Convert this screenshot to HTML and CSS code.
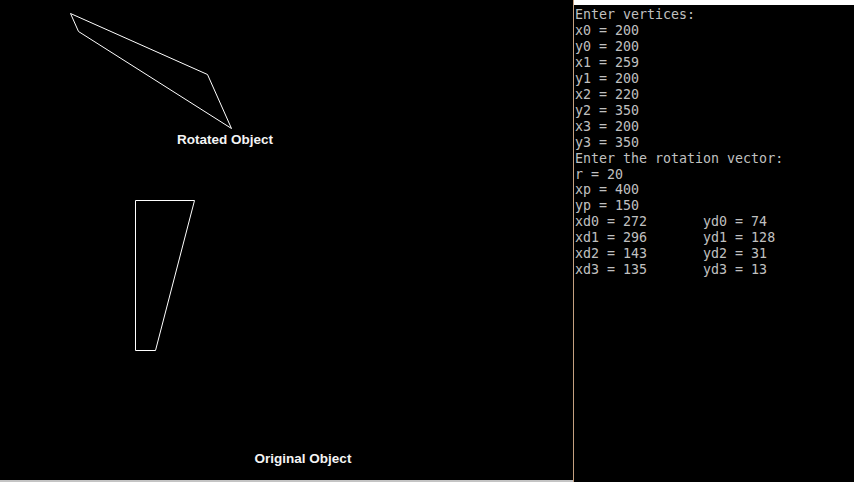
FILE: index.html
```html
<!DOCTYPE html>
<html>
<head>
<meta charset="utf-8">
<link rel="stylesheet" href="styles.css">
</head>
<body>
<div class="screen">
  <div class="graphics">
    <svg class="canvas" width="573" height="480" viewBox="0 0 573 480">
      <polygon class="shape" points="207.5,74.5 231.5,128.5 78.5,31.5 70.5,13.5"/>
      <text class="label" x="225" y="144" text-anchor="middle">Rotated Object</text>
      <polygon class="shape" points="135.5,200.5 194.5,200.5 155.5,350.5 135.5,350.5"/>
      <text class="label" x="303" y="463" text-anchor="middle">Original Object</text>
    </svg>
    <div class="taskbar"></div>
  </div>
  <div class="divider"></div>
  <div class="console">
    <div class="console-top"></div>
<pre class="output">Enter vertices:
x0 = 200
y0 = 200
x1 = 259
y1 = 200
x2 = 220
y2 = 350
x3 = 200
y3 = 350
Enter the rotation vector:
r = 20
xp = 400
yp = 150
xd0 = 272       yd0 = 74
xd1 = 296       yd1 = 128
xd2 = 143       yd2 = 31
xd3 = 135       yd3 = 13</pre>
  </div>
</div>
</body>
</html>
```
FILE: styles.css
```css
html, body {
  margin: 0;
  padding: 0;
  background: #000;
  overflow: hidden;
}
.screen {
  display: flex;
  width: 854px;
  height: 482px;
  background: #000;
}
.graphics {
  display: flex;
  flex-direction: column;
  width: 573px;
  height: 482px;
}
.canvas {
  display: block;
  background: #000;
}
.shape {
  fill: none;
  stroke: #ffffff;
  stroke-width: 1;
}
.label {
  fill: #f4f4f4;
  font-family: "Liberation Sans", Arial, sans-serif;
  font-weight: bold;
  font-size: 13.5px;
}
.taskbar {
  height: 2px;
  background: #c4c4c4;
}
.divider {
  width: 1px;
  height: 482px;
  background: #c4a080;
}
.console {
  flex: 1;
  display: flex;
  flex-direction: column;
}
.console-top {
  height: 5px;
  background: #ffffff;
}
.output {
  margin: 0;
  padding: 2px 0 0 1px;
  font-family: "DejaVu Sans Mono", "Liberation Mono", monospace;
  font-size: 13.3px;
  line-height: 15.95px;
  color: #c0c0c0;
}
```
